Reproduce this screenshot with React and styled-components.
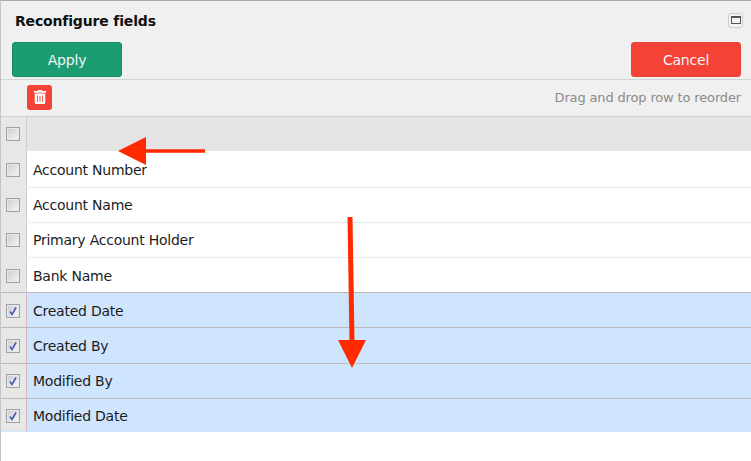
import React from "react";
import styled, { createGlobalStyle } from "styled-components";
import { FaTrashAlt } from "react-icons/fa";

const Global = createGlobalStyle`
  html, body { margin: 0; padding: 0; background: #fff; }
  body { font-family: "DejaVu Sans", "Liberation Sans", sans-serif; overflow: hidden; }
`;

const Page = styled.div`
  position: relative;
  width: 751px;
  height: 461px;
  box-sizing: border-box;
  border-top: 1px solid #aaa;
  border-left: 1px solid #c4c4c4;
  overflow: hidden;
`;

const TitleBar = styled.div`
  height: 38px;
  box-sizing: border-box;
  background: #f0f0f0;
  display: flex;
  align-items: center;
  justify-content: space-between;
  padding: 0 8px 0 14px;
`;

const Title = styled.h1`
  margin: 2px 0 0;
  font-size: 14px;
  font-weight: 700;
  letter-spacing: -0.17px;
  color: #111;
`;

const WindowBtn = styled.div`
  width: 15px;
  height: 15px;
  box-sizing: border-box;
  border: 1px solid #ccc;
  border-radius: 3px;
  display: flex;
  align-items: center;
  justify-content: center;
  background: #f4f4f4;
  &::after {
    content: "";
    width: 10px;
    height: 8px;
    box-sizing: border-box;
    border: 1px solid #555;
    border-top-width: 2px;
  }
`;

const ActionBar = styled.div`
  height: 41px;
  box-sizing: border-box;
  background: #f0f0f0;
  border-bottom: 1px solid #d4d4d4;
  display: flex;
  justify-content: space-between;
  padding: 3px 10px 0 11px;
`;

const Button = styled.button`
  width: 110px;
  height: 35px;
  border: 1px solid ${p => (p.$danger ? "#e8463a" : "#1a8a66")};
  border-radius: 3px;
  background: ${p => (p.$danger ? "#f44336" : "#1c9c72")};
  color: #f4f4f4;
  font-family: inherit;
  font-size: 14px;
  letter-spacing: -0.2px;
  padding: 0;
`;

const ToolBar = styled.div`
  height: 37px;
  box-sizing: border-box;
  background: #f0f0f0;
  border-bottom: 1px solid #cfcfcf;
  display: flex;
  align-items: center;
  justify-content: space-between;
  padding: 0 10px 2px 26px;
`;

const TrashBtn = styled.div`
  width: 25px;
  height: 25px;
  border-radius: 3px;
  background: #f44336;
  color: #fff;
  font-size: 14px;
  display: flex;
  align-items: center;
  justify-content: center;
`;

const Hint = styled.span`
  font-size: 13px;
  letter-spacing: -0.15px;
  color: #8a8a8a;
`;

const Row = styled.div`
  display: flex;
  height: ${p => p.$h}px;
  box-sizing: border-box;
  background: ${p => (p.$selected ? "#cfe5fd" : p.$header ? "#e5e5e5" : "#fff")};
  border-bottom: 1px solid ${p => (p.$line ? p.$line : "transparent")};
`;

const CheckCell = styled.div`
  width: 26px;
  flex: none;
  padding: ${p => (p.$nudge ? "1px" : "0")} 1px 0 0;
  background: #e7e7e7;
  border-right: 1px solid ${p => (p.$selected ? "#d9b8b8" : "#cfcfcf")};
  display: flex;
  align-items: center;
  justify-content: center;
  box-sizing: border-box;
`;

const Box = styled.div`
  width: 14px;
  height: 14px;
  box-sizing: border-box;
  border: 1px solid #a2a2a2;
  box-shadow: inset 0 0 0 1px #e8e8ea;
  background: linear-gradient(135deg, #c9c9d0, #f8f8fa);
  display: flex;
  align-items: center;
  justify-content: center;
`;

const Label = styled.div`
  flex: 1;
  padding: ${p => (p.$nudge ? "2px" : "0")} 0 0 6px;
  display: flex;
  align-items: center;
  font-size: 14px;
  letter-spacing: -0.24px;
  color: #1c1c1c;
`;

const ArrowLayer = styled.svg`
  position: absolute;
  left: -1px;
  top: -1px;
  pointer-events: none;
`;

const rows = [
  { name: "Account Number", h: 37, nudge: true },
  { name: "Account Name", h: 35 },
  { name: "Primary Account Holder", h: 35 },
  { name: "Bank Name", h: 35, line: "#b9b9b9", nudge: true },
  { name: "Created Date", h: 35, selected: true, nudge: true },
  { name: "Created By", h: 36, selected: true },
  { name: "Modified By", h: 35, selected: true },
  { name: "Modified Date", h: 33, selected: true, last: true, nudge: true },
];

function Check({ checked }) {
  return (
    <Box>
      {checked && (
        <svg width="10" height="10" viewBox="0 0 10 10">
          <path d="M2 5.5 L4 8.5 L8 1.5" fill="none" stroke="#4a5cab" strokeWidth="1.6" />
        </svg>
      )}
    </Box>
  );
}

export default function App() {
  return (
    <Page>
      <Global />
      <TitleBar>
        <Title>Reconfigure fields</Title>
        <WindowBtn />
      </TitleBar>
      <ActionBar>
        <Button>Apply</Button>
        <Button $danger>Cancel</Button>
      </ActionBar>
      <ToolBar>
        <TrashBtn>
          <FaTrashAlt />
        </TrashBtn>
        <Hint>Drag and drop row to reorder</Hint>
      </ToolBar>
      <Row $header $h={34}>
        <CheckCell>
          <Check />
        </CheckCell>
        <Label />
      </Row>
      {rows.map(r => (
        <Row
          key={r.name}
          $h={r.h}
          $selected={r.selected}
          $line={r.last ? null : r.line || (r.selected ? "#b9b9b9" : "#e4eef6")}
        >
          <CheckCell $selected={r.selected} $nudge={r.nudge}>
            <Check checked={r.selected} />
          </CheckCell>
          <Label $nudge={r.nudge}>{r.name}</Label>
        </Row>
      ))}
      <ArrowLayer width="751" height="461">
        <path d="M205 151 H145" stroke="#ff2a00" strokeWidth="3.5" fill="none" />
        <path d="M118 151 L146 137 V165 Z" fill="#ff2a00" />
        <path d="M350 217 L352 342" stroke="#ff2a00" strokeWidth="5" fill="none" />
        <path d="M338 340 H366 L352 368 Z" fill="#ff2a00" />
      </ArrowLayer>
    </Page>
  );
}
